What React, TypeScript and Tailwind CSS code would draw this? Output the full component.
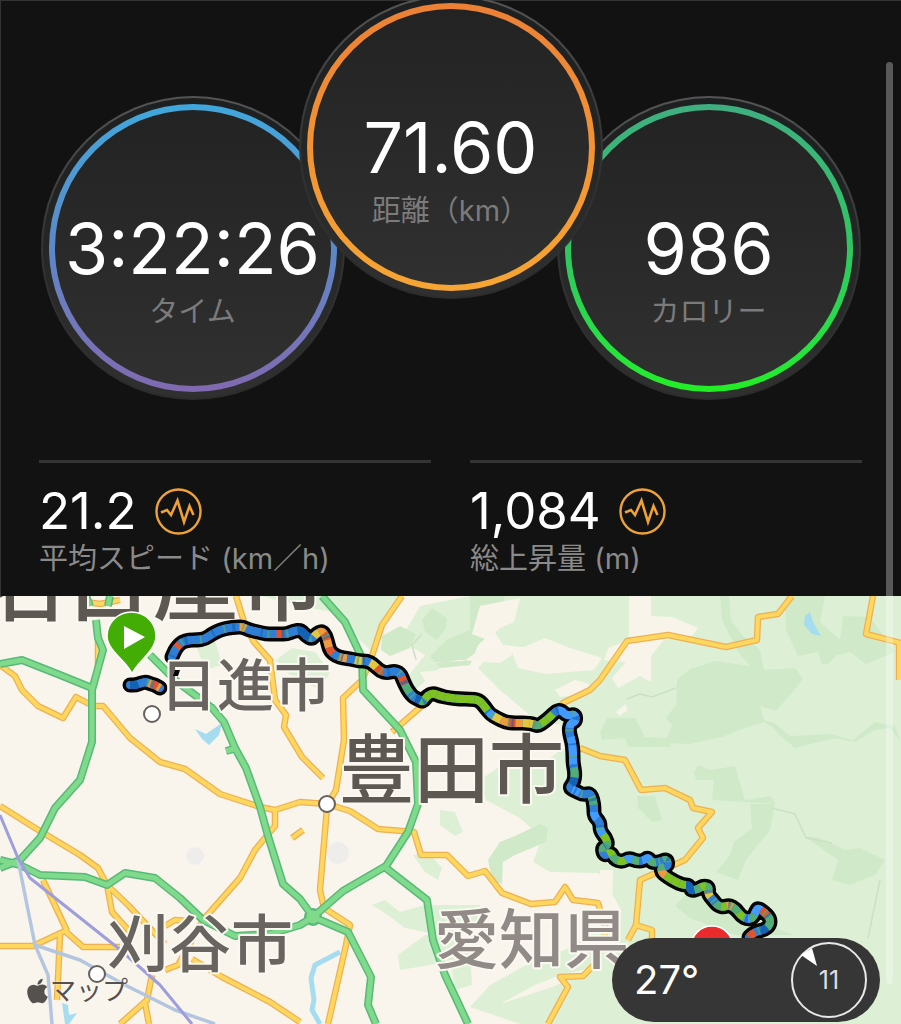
import { FaApple } from "react-icons/fa";

type Dial = {
  value: string;
  label: string;
  ring: string;
  place: string;
};

const dials: Dial[] = [
  {
    value: "3:22:26",
    label: "タイム",
    ring: "bg-linear-to-b from-[#3fa8dc] via-[#5b88c8] to-[#8069b0]",
    place: "mt-24",
  },
  {
    value: "71.60",
    label: "距離（km）",
    ring: "bg-linear-to-b from-[#ec8035] to-[#f6a534]",
    place: "z-10 -mx-[46px] -mt-[5px]",
  },
  {
    value: "986",
    label: "カロリー",
    ring: "bg-linear-to-b from-[#3fae80] via-[#30c560] to-[#22ee22]",
    place: "mt-24",
  },
];

const stats = [
  { value: "21.2", label: "平均スピード (km／h)" },
  { value: "1,084", label: "総上昇量 (m)" },
];

function DialView({ value, label, ring, place }: Dial) {
  return (
    <div className={`relative size-[304px] shrink-0 rounded-full bg-linear-to-b from-[#545454] via-[#333333] to-[#2c2c2c] p-[2px] ${place}`}>
      <div className="size-full rounded-full bg-linear-to-b from-[#1d1f20] via-[#252626] to-[#303030] p-[6px]">
        <div className={`size-full rounded-full p-[6px] ${ring}`}>
          <div className="flex size-full flex-col items-center rounded-full bg-linear-to-b from-[#232323] to-[#303030] pt-[103px]">
            <span className="text-[70px] leading-[72px] whitespace-nowrap text-white">{value}</span>
            <span className="mt-[7px] text-[29px] leading-[40px] whitespace-nowrap text-[#7b7b7b]">{label}</span>
          </div>
        </div>
      </div>
    </div>
  );
}

function WaveIcon() {
  return (
    <svg className="size-[47px]" viewBox="0 0 47 47" fill="none" stroke="#eda136" aria-hidden="true">
      <circle cx="23.5" cy="23.5" r="22" strokeWidth="2.4" />
      <path d="M6 24.5 12 22 16 27 22.5 12.500 29 34 34.500 18 38.500 27" strokeWidth="2.600" />
    </svg>
  );
}

const lightWoods = [
  "M505 596H901V1024H520L470 1007 490 985 535 960 570 948 604 925 622 912 610 890 598 873 550 872 533 862 542 838 520 818 486 800 480 780 506 762 566 748 545 728 500 690 478 668 490 655 545 650 503 645 490 625Z",
  "M262 596H398L384 622 372 652 350 630 332 612 300 606Z",
  "M400 640 420 606 470 596H530L510 625 480 640 470 665 440 668 415 690 405 680 425 655Z",
  "M372 905 385 900 400 912 425 905 480 905 475 930 440 935 405 928 388 915Z",
  "M398 955 425 935 455 935 460 960 430 965 400 970Z",
  "M276 660 292 648 315 652 330 672 320 690 290 675Z",
  "M197 648 215 640 222 665 205 670Z",
  "M440 810 455 812 463 832 455 836 440 825Z",
  "M413 855 428 852 442 868 438 880 425 872Z",
  "M448 945 470 950 472 985 455 990Z",
];

const clearings = [
  "M512 652 545 638 570 648 602 658 594 670 545 674 518 668Z",
  "M629 596H651V616L672 617 698 628 692 636 664 640 651 656V682L640 676 618 688 612 678 626 662 604 660 608 648 629 640Z",
  "M428 664 460 660 500 663 512 655 508 645 480 650 464 661 440 662Z",
  "M420 672 470 668 482 675 478 688 490 694 500 700 478 698 430 690Z",
  "M494 725 560 724 568 745 540 765 505 768 485 750Z",
  "M555 690 575 680 590 684 582 694 560 697Z",
  "M480 606 520 598 514 622 500 628 488 640 472 634Z",
  "M600 870H613L612 912 598 920Z",
  "M535 985 560 975 592 968 555 986 500 1004Z",
  "M616 712 626 704 627 710 620 716Z",
];

const darkWoods = [
  "M677 680 690 669 715 661 750 666 757 646 764 670 795 668 803 679 792 693 776 711 760 706 765 722 750 726 722 737 690 744 665 743 672 725 666 718 676 705Z",
  "M600 732 607 718 635 718 645 737 672 738 670 747 628 747 625 738 602 740Z",
  "M758 718 776 724 790 736 830 734 853 740 875 722 895 726 901 742 890 728 875 730 855 742 835 738 795 748 783 738 772 727Z",
  "M785 596H825L820 622 840 640 843 616 870 617 895 652 866 664 850 652 837 655 828 664 822 664 818 652 798 656 786 630Z",
  "M720 596H729L731 620 742 635 760 650 764 672 750 666 738 652 722 620Z",
  "M750 804 775 804 770 830 746 860 738 880 716 872 730 855 734 842 752 828Z",
  "M694 772 698 765 710 770 735 766 745 800 770 796 776 804 712 800 714 780 696 780Z",
  "M675 906 690 890 705 884 724 900 762 922 794 935H735L690 918Z",
  "M804 836 820 838 845 850 860 848 885 860 875 875 850 885 832 880 838 860Z",
  "M382 636 400 626 416 634 410 648 390 656 381 650Z",
  "M422 620 432 608 447 618 446 628 437 640 425 632Z",
  "M470 596H505L495 630 478 645 470 665 440 668 430 656 446 640 470 630Z",
  "M488 860 500 842 515 836 540 824 548 828 546 842 515 855 503 862 502 884 492 880Z",
  "M637 796H655L662 820 652 822 638 808Z",
];

const yellowRoads = [
  "M0 665 15 676 22 690 38 706 63 718 76 697 93 706H103L130 738 160 762 185 769 220 794 260 807 275 810 300 802 327 804",
  "M236 596 245 625 254 642 270 660 275 700 286 715 284 727 302 757 323 778",
  "M402 596 382 625 370 662 362 680 343 698 344 740 336 790 327 805",
  "M424 704 392 732",
  "M327 804 350 811 378 829 414 832 421 855H447L468 876 485 871 502 893 531 904 555 902 565 887 573 900 598 903 606 930 595 964 583 976 560 977 568 987 548 1024",
  "M792 596 778 614 758 617 757 640 726 647 668 635 627 641 600 680 590 690 563 703 545 724",
  "M873 596 866 634 901 643",
  "M899 643V680",
  "M580 748 600 756 625 760 641 790 665 788 690 800 693 808 712 812 698 828 703 838 685 860 640 880 636 925 652 930V944",
  "M636 925 628 940",
  "M0 806 35 828 80 855 98 868 107 885 128 905 145 923 165 944",
  "M107 885 112 912 130 932",
  "M0 946H33L65 931 83 947H120",
  "M43 880 67 931M60 935 57 1000",
  "M327 808 320 890 324 908 350 925 346 945 328 1024",
  "M275 810V826L255 850 240 878 203 920 178 965 165 970",
  "M165 926 175 920 190 921",
  "M192 959 222 977 270 1002 300 1022",
  "M152 975 147 1000 120 1024M145 1003 149 1024",
  "M292 838 303 830",
  "M86 602 100 604 120 600",
  "M98 640V668L92 690",
];

const greenRoads = [
  "M0 664 22 660 60 675 92 688",
  "M86 596 90 606M110 596 108 606",
  "M96 620 98 638 103 650 92 690V742L80 780 55 808 40 838 20 860 0 868",
  "M0 860 20 865 40 875 85 877 107 885 125 873 155 878 180 898 203 920 235 936 270 934 300 925 313 917",
  "M150 655 175 680 212 708 224 722 235 748 246 768 260 807 268 836 283 884 300 899 313 917",
  "M226 751 237 748",
  "M322 596 345 622 362 658 363 690 400 730 416 762 418 804 408 832 386 866 343 891 313 917",
  "M386 868 427 900 433 940 445 975 468 1024",
  "M313 917 348 932 371 977 368 1005 376 1024",
];

const BLUE = "#2f7fd6";
const NAVY = "#1462b4";
const SKY = "#429bff";
const LEAF = "#7dc220";
const SEA = "#54ad75";
const GOLD = "#e3c740";
const AMBER = "#f09a3c";
const RED = "#e2542c";

type Fix = [x: number, y: number, color: string];

const routeStart: Fix[] = [
  [130, 685, NAVY], [136, 685, NAVY], [141, 683, BLUE], [146, 682, BLUE], [151, 684, AMBER], [155, 685, RED], [160, 688, AMBER],
];

const routeMain: Fix[] = [
  [172, 657, BLUE], [175, 650, BLUE], [178, 646, RED], [182, 642, BLUE], [189, 640, BLUE], [197, 640, BLUE], [205, 639, BLUE],
  [212, 634, BLUE], [220, 630, BLUE], [228, 628, BLUE], [236, 627, BLUE], [243, 627, AMBER], [249, 630, BLUE], [258, 632, BLUE],
  [266, 634, BLUE], [273, 634, BLUE], [280, 634, RED], [287, 634, BLUE], [294, 631, BLUE], [301, 630, NAVY], [306, 636, NAVY],
  [312, 639, BLUE], [316, 634, GOLD], [322, 631, AMBER], [326, 636, RED], [328, 644, AMBER], [330, 651, RED], [336, 656, BLUE],
  [343, 658, AMBER], [351, 659, BLUE], [359, 661, GOLD], [367, 661, BLUE], [373, 664, GOLD], [380, 671, RED], [387, 673, BLUE],
  [394, 671, BLUE], [400, 673, BLUE], [403, 680, RED], [407, 689, SEA], [413, 697, BLUE], [418, 699, NAVY], [423, 702, SEA],
  [427, 696, LEAF], [433, 693, LEAF], [440, 696, LEAF], [450, 698, LEAF], [460, 699, LEAF], [470, 699, LEAF], [479, 700, LEAF],
  [485, 707, LEAF], [490, 714, SKY], [497, 718, GOLD], [505, 722, AMBER], [512, 723, RED], [519, 723, AMBER], [526, 723, GOLD],
  [533, 724, GOLD], [538, 726, SEA], [544, 722, LEAF], [550, 717, LEAF], [556, 711, BLUE], [561, 710, SKY], [567, 716, SKY],
  [575, 714, SKY], [576, 721, SKY], [570, 724, SKY], [569, 732, BLUE], [572, 742, SKY], [573, 752, SKY], [573, 763, SKY],
  [575, 773, SEA], [574, 782, NAVY], [569, 788, BLUE], [576, 791, SKY], [583, 795, BLUE], [590, 793, BLUE], [593, 800, SEA],
  [594, 808, BLUE], [594, 816, SKY], [600, 822, BLUE], [600, 831, SKY], [606, 838, LEAF], [608, 845, SEA], [602, 848, SEA],
  [604, 856, BLUE], [611, 852, LEAF], [614, 859, SEA], [622, 862, LEAF], [629, 858, SKY], [636, 861, SEA], [643, 861, SKY],
  [648, 857, SKY], [652, 863, SEA], [660, 862, BLUE], [667, 859, SEA], [668, 866, BLUE], [661, 868, SEA], [662, 873, AMBER],
  [669, 878, LEAF], [676, 882, LEAF], [683, 885, LEAF], [689, 885, NAVY], [691, 891, NAVY], [698, 889, SEA], [703, 886, LEAF],
  [709, 887, SEA], [708, 894, GOLD], [713, 900, BLUE], [718, 906, SEA], [724, 907, LEAF], [729, 905, AMBER], [736, 909, SEA],
  [741, 916, LEAF], [747, 919, SKY], [753, 918, SEA], [756, 911, SKY], [758, 908, SKY], [764, 912, RED], [770, 918, SEA],
  [770, 925, SEA], [764, 930, NAVY], [758, 931, BLUE], [752, 934, RED], [749, 937, RED],
];

function middle(a: Fix, b: Fix) {
  return `${(a[0] + b[0]) / 2} ${(a[1] + b[1]) / 2}`;
}

function bend(track: Fix[], i: number) {
  const at = track[i];
  const before = track[i - 1] ?? at;
  const after = track[i + 1] ?? at;
  return { from: middle(before, at), curve: `Q${at[0]} ${at[1]} ${middle(at, after)}` };
}

function smoothPath(track: Fix[]) {
  return `M${track[0][0]} ${track[0][1]}` + track.map((_, i) => bend(track, i).curve).join("");
}

function Spans({ points, steady }: { points: Fix[]; steady: boolean }) {
  return points.map((point, i) => {
    if ((point[2] === LEAF) !== steady) return null;
    const { from, curve } = bend(points, i);
    return <path key={i} d={`M${from}${curve}`} stroke={point[2]} strokeWidth="8" />;
  });
}

function Track({ points }: { points: Fix[] }) {
  const outline = smoothPath(points);
  return (
    <g>
      <path d={outline} stroke="#050505" strokeWidth="15" strokeLinecap="round" />
      <path d={outline} stroke={BLUE} strokeWidth="8" strokeLinecap="round" />
      <Spans points={points} steady={false} />
      <path d={outline} stroke={NAVY} strokeWidth="8" strokeDasharray="2 19 3 26" strokeOpacity="0.6" />
      <path d={outline} stroke={SEA} strokeWidth="8" strokeDasharray="2 24 2 17" strokeDashoffset="9" strokeOpacity="0.7" />
      <Spans points={points} steady />
    </g>
  );
}

const cities = [
  { name: "名古屋市", x: -22, y: 614, size: 87, fill: "#5d5852" },
  { name: "豊田市", x: 339, y: 797, size: 75, fill: "#5d5852" },
  { name: "刈谷市", x: 107, y: 967, size: 62, fill: "#69645f" },
  { name: "愛知県", x: 434, y: 963, size: 65, fill: "#918a86" },
];

function CityLabel({ name, x, y, size, fill }: (typeof cities)[number]) {
  return (
    <text
      x={x}
      y={y}
      fontSize={size}
      fill={fill}
      stroke="#fbf8f2"
      strokeWidth="4"
      strokeLinejoin="round"
      paintOrder="stroke"
      className="font-medium"
    >
      {name}
    </text>
  );
}

function RouteMap() {
  return (
    <svg className="block w-full bg-[#f9f5ec]" viewBox="0 596 901 428" fill="none" strokeLinejoin="round" role="img" aria-label="ルートマップ">
      <g fill="#ddf0d5">
        {lightWoods.map((d) => <path key={d} d={d} />)}
      </g>
      <g fill="#d0eac9">
        {darkWoods.map((d) => <path key={d} d={d} />)}
      </g>
      <g fill="#f8f4ea">
        {clearings.map((d) => <path key={d} d={d} />)}
      </g>
      <path d="M627 699 640 694 652 697 676 688M416 660 412 645 422 634M772 808 795 814 806 838 832 843M868 938 880 880" stroke="#c9e2c2" strokeWidth="1.500" />
      <g fill="#efedec">
        <circle cx="195" cy="856" r="9" />
        <circle cx="338" cy="853" r="11" />
      </g>
      <g fill="#a5dcf0">
        <path d="M195 729 206 734 222 723 219 735 209 745 202 739Z" />
        <path d="M805 616 810 612 813 622 821 636 812 634 804 625Z" />
        <path d="M62 1003 68 1005 69 1015 77 1013 69 1024H65Z" />
      </g>
      <path d="M340 952 315 965 311 978 314 1000 312 1010 320 1024" stroke="#a5dcf0" strokeWidth="5" />

      <g stroke="#eeb054" strokeWidth="6.500">
        {yellowRoads.map((d) => <path key={d} d={d} />)}
      </g>
      <g stroke="#ffd65e" strokeWidth="4">
        {yellowRoads.map((d) => <path key={d} d={d} />)}
      </g>
      <g stroke="#58b978" strokeWidth="8">
        {greenRoads.map((d) => <path key={d} d={d} />)}
        <circle cx="313" cy="917" r="5" />
      </g>
      <g stroke="#7fda8b" strokeWidth="5">
        {greenRoads.map((d) => <path key={d} d={d} />)}
        <circle cx="313" cy="917" r="4" />
      </g>
      <path d="M18 860 35 945 48 975 52 1024M35 945 80 960 125 985 175 1010 215 1024" stroke="#b4c6df" strokeWidth="3.500" />
      <path d="M0 815 18 858 30 878 118 948 160 985 192 1024" stroke="#9d9edb" strokeWidth="3" />

      {cities.map((city) => <CityLabel key={city.name} {...city} />)}

      <Track points={routeStart} />
      <Track points={routeMain} />

      <CityLabel name="日進市" x={160} y={706} size={57} fill="#69645f" />
      <path d="M175 670H180L178 676H173Z" fill="#050505" />

      <g fill="#ffffff" stroke="#66615d" strokeWidth="2">
        <circle cx="152" cy="714" r="8" />
        <circle cx="327" cy="804" r="8" />
        <circle cx="97" cy="974" r="8" />
      </g>
      <path d="M132 674C128 662 107 651 107 636A24.500 24 0 0 1 156 636C156 651 137 662 132 674Z" fill="#43ad05" stroke="#ffffff" strokeWidth="1.500" />
      <path d="M124 626V649L145 637Z" fill="#ffffff" />
      <circle cx="712" cy="947" r="21" fill="#e92b2d" stroke="#ffffff" strokeWidth="1.500" />
    </svg>
  );
}

function WeatherPill() {
  return (
    <div className="absolute right-[21px] bottom-[2px] flex h-[84px] w-[268px] items-center justify-between rounded-full bg-[#363636] pr-[13px] pl-[22px] text-white">
      <span className="text-[40px] leading-[48px]">27°</span>
      <div className="relative flex size-[76px] items-center justify-center rounded-full border-2 border-[#e8e8e8]">
        <svg className="absolute inset-0 size-full" viewBox="0 0 72 72" aria-hidden="true">
          <path d="M8 11 19 4 24 22Z" fill="#ffffff" />
        </svg>
        <span className="text-[25px] leading-[28px] text-[#dedede]">11</span>
      </div>
    </div>
  );
}

export default function App() {
  return (
    <main
      lang="ja"
      className="relative min-h-screen overflow-hidden bg-[#121212] font-[Inter,'Noto_Sans_CJK_JP',sans-serif]"
    >
      <header className="overflow-hidden shadow-[inset_1px_1px_0_#333333]">
        <section className="flex items-start justify-center">
          {dials.map((dial) => <DialView key={dial.value} {...dial} />)}
        </section>
        <section className="mt-[60px] grid grid-cols-2 gap-[39px] px-[39px] pb-[18px]">
          {stats.map((stat) => (
            <div key={stat.value} className="border-t-3 border-[#343434] pt-[22px]">
              <div className="flex items-center gap-[18px]">
                <span className="text-[51px] leading-[52px] text-white">{stat.value}</span>
                <WaveIcon />
              </div>
              <p className="mt-[3px] text-[29px] leading-[38px] whitespace-nowrap text-[#8a8a8a]">{stat.label}</p>
            </div>
          ))}
        </section>
      </header>
      <section className="relative">
        <RouteMap />
        <div className="absolute bottom-[17px] left-[25px] flex items-center text-[#55514e]">
          <FaApple className="h-[28px] w-[25px]" aria-hidden="true" />
          <span className="text-[26px] leading-[32px] [text-shadow:0_0_2px_#ffffff]">マップ</span>
        </div>
        <WeatherPill />
      </section>
      <div className="absolute top-[62px] right-[8px] bottom-[40px] w-[7px] rounded-full bg-white/30" />
    </main>
  );
}
